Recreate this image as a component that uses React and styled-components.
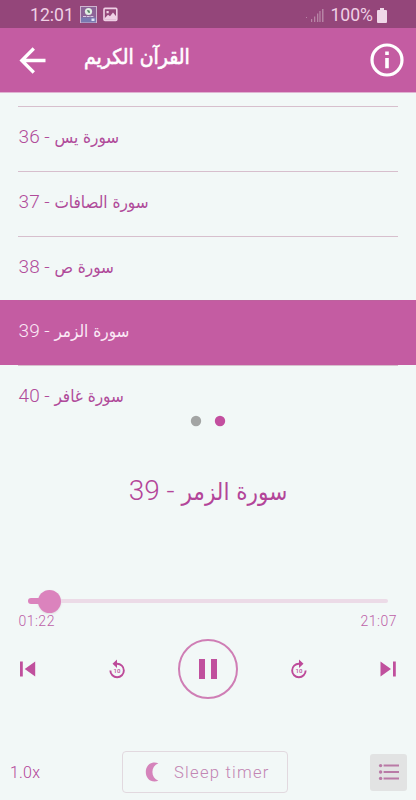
import React from "react";
import styled, { createGlobalStyle } from "styled-components";

const GlobalStyle = createGlobalStyle`
  * { box-sizing: border-box; }
  body { margin: 0; background: #f2f8f7; font-family: Roboto, sans-serif; }
  button { font: inherit; color: inherit; background: none; border: 0; padding: 0; margin: 0; display: flex; }
  svg { display: block; flex: none; }
`;

const Screen = styled.div`
  width: 416px;
  height: 800px;
  display: flex;
  flex-direction: column;
  overflow: hidden;
  background: #f2f8f7;
  color: #b34599;
`;

const StatusBar = styled.div`
  height: 28px;
  flex: none;
  display: flex;
  align-items: center;
  padding: 2px 29px 0 30px;
  background: #94467a;
  color: #efd0e5;
  font-size: 17.6px;
`;

const Clock = styled.span`
  width: 50px;
  white-space: nowrap;
`;

const Battery = styled.span`
  margin: 0 4px 0 6px;
`;

const Spacer = styled.div`
  flex: 1;
`;

const Header = styled.header`
  height: 65px;
  flex: none;
  display: flex;
  align-items: center;
  padding: 0 12px 0 19px;
  background: #c45ca2;
  border-bottom: 1px solid #e0b3d2;
  color: #fff;
`;

const HeaderTitle = styled.h1`
  margin: 0 0 7px 38px;
  font-family: "DejaVu Sans Condensed", "DejaVu Sans", sans-serif;
  font-stretch: condensed;
  font-size: 21px;
  line-height: 28px;
  font-weight: 400;
  -webkit-text-stroke: 0.6px currentColor;
  white-space: nowrap;
`;

const SurahList = styled.div`
  height: 319px;
  flex: none;
  overflow: hidden;
  padding-top: 13px;
`;

const Row = styled.div`
  height: 64.8px;
  padding: 0 18px;
  background: ${(p) => (p.$active ? "#c45ca2" : "transparent")};
  color: ${(p) => (p.$active ? "#fbe9f6" : "#b04b9a")};
`;

const RowInner = styled.div`
  height: 100%;
  display: flex;
  align-items: center;
  padding: 0 0 3px 0.6px;
  border-top: 1px solid ${(p) => (p.$active ? "#bd629e" : "#d7bfcd")};
`;

const Label = styled.div`
  display: flex;
  align-items: baseline;
  white-space: pre;
  font-weight: 300;
  font-size: ${(p) => p.$size}px;
  line-height: 1.4;
`;

const Arabic = styled.span`
  font-family: "DejaVu Sans Condensed", "DejaVu Sans", sans-serif;
  font-stretch: condensed;
  font-weight: 400;
  font-size: ${(p) => p.$size}px;
`;

const Dots = styled.div`
  height: 19px;
  flex: none;
  display: flex;
  justify-content: center;
  align-items: center;
`;

const Dot = styled.svg.attrs({ width: 24, height: 12, viewBox: "0 0 24 12" })`
  margin-bottom: 1px;
  fill: ${(p) => (p.$active ? "#c34f9f" : "#a3a5a4")};
`;

const NowPlaying = styled.div`
  height: 120px;
  flex: none;
  display: flex;
  justify-content: center;
  align-items: center;
`;

const SliderRow = styled.div`
  height: 24px;
  margin: 38px 28px 0;
  flex: none;
  display: flex;
  align-items: center;
`;

const Played = styled.div`
  width: 12px;
  height: 6px;
  border-radius: 3px 0 0 3px;
  background: #db83bd;
`;

const Thumb = styled.div`
  width: 23px;
  height: 23px;
  margin-left: -2px;
  border-radius: 50%;
  background: #db83bd;
  box-shadow: 0 1px 2px #c4a4b955;
`;

const Remaining = styled.div`
  flex: 1;
  height: 4px;
  border-radius: 0 2px 2px 0;
  background: #ecdbe7;
`;

const Times = styled.div`
  height: 16px;
  flex: none;
  display: flex;
  justify-content: space-between;
  align-items: center;
  padding: 0 19px 0 18.4px;
  font-size: 14px;
  font-weight: 300;
  letter-spacing: 0.5px;
  color: #bd60a8;
`;

const Controls = styled.div`
  height: 62px;
  margin-top: 9px;
  flex: none;
  display: grid;
  grid-template-columns: 89px 70px 61px 69px 1fr;
  align-items: center;
  padding: 0 19px 0 19px;
`;

const ControlButton = styled.button`
  justify-self: ${(p) => p.$align || "start"};
`;

const PlayButton = styled.button`
  width: 60px;
  height: 60px;
  justify-content: center;
  align-items: center;
  border: 2px solid #cf7eb5;
  border-radius: 50%;
`;

const Footer = styled.footer`
  height: 44px;
  margin-top: 50px;
  flex: none;
  display: grid;
  grid-template-columns: 112px 166px 1fr;
  align-items: center;
  padding: 0 9px 0 10px;
`;

const Speed = styled.span`
  font-size: 16px;
  font-weight: 300;
  letter-spacing: 0.2px;
`;

const TimerButton = styled.button`
  height: 42px;
  align-items: center;
  padding-left: 22px;
  gap: 15px;
  border: 1px solid #e2d9df;
  border-radius: 4px;
  color: #c285b3;
  font-size: 16.6px;
  font-weight: 300;
  letter-spacing: 1.25px;
  white-space: nowrap;
`;

const QueueButton = styled.button`
  width: 37px;
  height: 37px;
  justify-self: end;
  align-items: center;
  justify-content: center;
  background: #e2e3e3;
  border-radius: 3px;
`;

const StatusIcons = () => (
  <svg width="38" height="18" viewBox="0 0 38 18">
    <rect x="0.5" y="0.5" width="16" height="16" fill="#8d6498" stroke="#cfb5d0" />
    <rect x="1" y="11.5" width="15" height="5" fill="#7979b1" />
    <circle cx="8.5" cy="5.5" r="3.6" fill="#e2efe4" />
    <path d="M7 4l2.500 .5.500 2.500-2-.5z" fill="#528061" />
    <path d="M3 10.500h11" stroke="#d9cae4" strokeDasharray="3 .7" />
    <rect x="11.5" y="12.5" width="3" height="2.5" fill="#e0e2f4" />
    <rect x="24" y="2.4" width="12.8" height="12" rx="1" fill="none" stroke="#efd0e5" strokeWidth="1.6" />
    <path d="M24.500 12.500l3.500-3.800 2 1.500 3-3.700 3.500 4.300v3h-12zM26.500 5h2.200v2.200h-2.200z" fill="#efd0e5" />
  </svg>
);

const SignalIcon = () => (
  <svg width="18" height="14" viewBox="0 0 18 14" fill="#b784a5">
    <path d="M0 9h1v1H0zM5 11h1.2v3H5zM8 8.5h1.3V14H8zM11 5.5h1.3V14H11zM13.3 3h1.3v11h-1.3zM16 1h1.5v13H16z" />
  </svg>
);

const BatteryIcon = () => (
  <svg width="10" height="15" viewBox="0 0 10 15" fill="#efd8e8">
    <path d="M3 0h4v2h2a1 1 0 0 1 1 1v11a1 1 0 0 1-1 1H1a1 1 0 0 1-1-1V3a1 1 0 0 1 1-1h2z" />
  </svg>
);

const BackIcon = () => (
  <svg width="27" height="27" viewBox="0 0 27 27" fill="none" stroke="#fff" strokeWidth="3.3">
    <path d="M26.5 13.5H3M14.8 1.5l-12 12 12 12" />
  </svg>
);

const InfoIcon = () => (
  <svg width="34" height="34" viewBox="0 0 34 34">
    <circle cx="17" cy="17" r="15" fill="none" stroke="#fff" strokeWidth="3.2" />
    <path d="M15.2 8.6h3.6v3.3h-3.6zM15.2 14.9h3.6v10.3h-3.6z" fill="#fff" />
  </svg>
);

const SkipIcon = ({ next }) => (
  <svg width="18" height="16" viewBox="0 0 18 16" fill="#c0509d">
    <path d={next ? "M1.5 .5v15l10.5-7.5zM14 .5h2.8v15h-2.8z" : "M1 .5h2.8v15H1zM16.2 .5v15L5.7 8z"} />
  </svg>
);

const TenText = styled.text`
  font: 500 6px Roboto, sans-serif;
  letter-spacing: 0.2px;
`;

const SeekIcon = ({ forward }) => (
  <svg width="18" height="20" viewBox="0 0 18 20" fill="#bd4a99">
    {forward ? (
      <path d="M9 .5v3.3a7.7 7.7 0 1 0 7.6 7.7h-1.9A5.8 5.8 0 1 1 9 5.7v3.4l4.5-4.3z" />
    ) : (
      <path d="M9 .5v3.3a7.7 7.7 0 1 1-7.6 7.7h1.9A5.8 5.8 0 1 0 9 5.7v3.4L4.5 4.8z" />
    )}
    <TenText x="9.1" y="13.6" textAnchor="middle">10</TenText>
  </svg>
);

const PauseIcon = () => (
  <svg width="18" height="20" viewBox="0 0 18 20" fill="#c0509d">
    <path d="M0 0h6v20H0zM12 0h6v20h-6z" />
  </svg>
);

const MoonIcon = () => (
  <svg width="14" height="20" viewBox="0 0 14 20" fill="#d584bb">
    <path d="M13.400 1.200C6-1.400 .8 3.500 .8 10s5.200 11.400 12.600 8.800C9.500 17 7.400 14 7.400 10S9.500 3 13.400 1.200z" />
  </svg>
);

const ListIcon = () => (
  <svg width="22" height="18" viewBox="0 0 22 18" fill="#b97aa6">
    <circle cx="2.6" cy="2.6" r="1.7" />
    <circle cx="2.6" cy="9" r="1.7" />
    <circle cx="2.6" cy="15.4" r="1.7" />
    <path d="M5.6 1.6h15.4v2H5.6zM5.6 8h15.4v2H5.6zM5.6 14.4h15.4v2H5.6z" />
  </svg>
);

const PageDot = ({ active }) => (
  <Dot $active={active}>
    <circle cx="12" cy="6" r="5.2" />
  </Dot>
);

const surahs = [
  { number: 36, name: "سورة يس" },
  { number: 37, name: "سورة الصافات" },
  { number: 38, name: "سورة ص" },
  { number: 39, name: "سورة الزمر" },
  { number: 40, name: "سورة غافر" },
];

const SurahLabel = ({ surah, size, arabicSize }) => (
  <Label $size={size}>
    <span>{`${surah.number} - `}</span>
    <Arabic $size={arabicSize} dir="rtl" lang="ar">{surah.name}</Arabic>
  </Label>
);

export default function App() {
  const current = surahs[3];
  return (
    <Screen>
      <GlobalStyle />
      <StatusBar>
        <Clock>12:01</Clock>
        <StatusIcons />
        <Spacer />
        <SignalIcon />
        <Battery>100%</Battery>
        <BatteryIcon />
      </StatusBar>
      <Header>
        <button aria-label="Back"><BackIcon /></button>
        <HeaderTitle dir="rtl" lang="ar">القرآن الكريم</HeaderTitle>
        <Spacer />
        <button aria-label="Info"><InfoIcon /></button>
      </Header>
      <SurahList>
        {surahs.map((s) => (
          <Row key={s.number} $active={s === current}>
            <RowInner $active={s === current}>
              <SurahLabel surah={s} size={19} arabicSize={17} />
            </RowInner>
          </Row>
        ))}
      </SurahList>
      <Dots>
        <PageDot />
        <PageDot active />
      </Dots>
      <NowPlaying>
        <SurahLabel surah={current} size={28} arabicSize={24} />
      </NowPlaying>
      <SliderRow>
        <Played />
        <Thumb />
        <Remaining />
      </SliderRow>
      <Times>
        <span>01:22</span>
        <span>21:07</span>
      </Times>
      <Controls>
        <ControlButton aria-label="Previous"><SkipIcon /></ControlButton>
        <ControlButton aria-label="Back 10 seconds"><SeekIcon /></ControlButton>
        <PlayButton aria-label="Pause"><PauseIcon /></PlayButton>
        <ControlButton $align="end" aria-label="Forward 10 seconds"><SeekIcon forward /></ControlButton>
        <ControlButton $align="end" aria-label="Next"><SkipIcon next /></ControlButton>
      </Controls>
      <Footer>
        <Speed>1.0x</Speed>
        <TimerButton><MoonIcon />Sleep timer</TimerButton>
        <QueueButton aria-label="Queue"><ListIcon /></QueueButton>
      </Footer>
    </Screen>
  );
}
